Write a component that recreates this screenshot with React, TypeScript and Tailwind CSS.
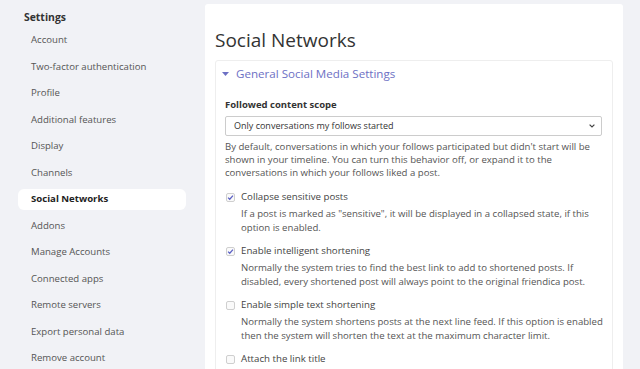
import React from 'react';

const navItems = [
  'Account',
  'Two-factor authentication',
  'Profile',
  'Additional features',
  'Display',
  'Channels',
  'Social Networks',
  'Addons',
  'Manage Accounts',
  'Connected apps',
  'Remote servers',
  'Export personal data',
  'Remove account',
];

interface OptionProps {
  label: string;
  help?: string;
  checked?: boolean;
}

const CheckOption: React.FC<OptionProps> = ({ label, help, checked = false }) => (
  <div className="mb-[9px]">
    <div className="flex items-center h-[14px]">
      <span className="ml-[1px] w-[9px] h-[9px] rounded-[2px] border border-[#cfcfcf] bg-[#fafafa] flex items-center justify-center">
        {checked && (
          <svg width="7" height="7" viewBox="0 0 8 8">
            <path d="M1.2 4.2 L3.1 6 L6.8 1.8" fill="none" stroke="#5a5fc4" strokeWidth="1.4" />
          </svg>
        )}
      </span>
      <span className="ml-[6px] text-[9.7px] text-[#444]">{label}</span>
    </div>
    {help && <p className="pl-[16px] mt-[3px] text-[9.6px] leading-[14px] text-[#555]">{help}</p>}
  </div>
);

export default function App() {
  return (
    <div
      className="w-[640px] h-[369px] overflow-hidden bg-[#f1f2f6] flex"
      style={{ fontFamily: '"Open Sans", "Liberation Sans", sans-serif' }}
    >
      <aside className="w-[205px] shrink-0 pt-[9px]">
        <div className="pl-[24px] text-[10.4px] font-bold text-[#333] leading-[16px]">Settings</div>
        <ul className="mt-[5px]">
          {navItems.map((item) => {
            const active = item === 'Social Networks';
            return (
              <li
                key={item}
                className={`ml-[18px] mr-[19px] h-[21px] mb-[5.5px] flex items-center pl-[13px] text-[9.6px] rounded-md ${
                  active ? 'bg-white font-bold text-[#222]' : 'text-[#555]'
                }`}
              >
                {item}
              </li>
            );
          })}
        </ul>
      </aside>

      <main className="mt-[4px] mr-[17px] flex-1 bg-white rounded-t-[3px] px-[10px]">
        <h1 className="mt-[22px] text-[19px] leading-[28px] text-[#333]">Social Networks</h1>
        <section className="mt-[6px] border border-[#eeeeee] rounded-[3px] px-[9px] pt-[3px]">
          <div className="flex items-center h-[20px] text-[#6d70c4] text-[11.6px]">
            <svg width="7" height="5" viewBox="0 0 7 5" className="ml-[-3px] mr-[7px]">
              <path d="M0 0 H7 L3.5 4 Z" fill="#6d70c4" />
            </svg>
            General Social Media Settings
          </div>

          <div className="mt-[14px] text-[9.5px] font-bold text-[#333] leading-[14px]">Followed content scope</div>
          <div className="mt-[4px] h-[20px] border border-[#cccccc] rounded-[2px] flex items-center justify-between pl-[8px] pr-[6px] mr-[1px]">
            <span className="text-[9px] text-[#333]">Only conversations my follows started</span>
            <svg width="6" height="4" viewBox="0 0 6 4">
              <path d="M0.6 0.6 L3 3 L5.4 0.6" fill="none" stroke="#444" strokeWidth="1.2" />
            </svg>
          </div>
          <p className="mt-[4px] text-[9.6px] leading-[13px] text-[#555] pr-[10px]">
            By default, conversations in which your follows participated but didn't start will be shown in your
            timeline. You can turn this behavior off, or expand it to the conversations in which your follows liked a
            post.
          </p>

          <div className="mt-[11px]">
            <CheckOption
              checked
              label="Collapse sensitive posts"
              help={'If a post is marked as "sensitive", it will be displayed in a collapsed state, if this option is enabled.'}
            />
            <CheckOption
              checked
              label="Enable intelligent shortening"
              help="Normally the system tries to find the best link to add to shortened posts. If disabled, every shortened post will always point to the original friendica post."
            />
            <CheckOption
              label="Enable simple text shortening"
              help="Normally the system shortens posts at the next line feed. If this option is enabled then the system will shorten the text at the maximum character limit."
            />
            <CheckOption label="Attach the link title" />
          </div>
        </section>
      </main>
    </div>
  );
}
